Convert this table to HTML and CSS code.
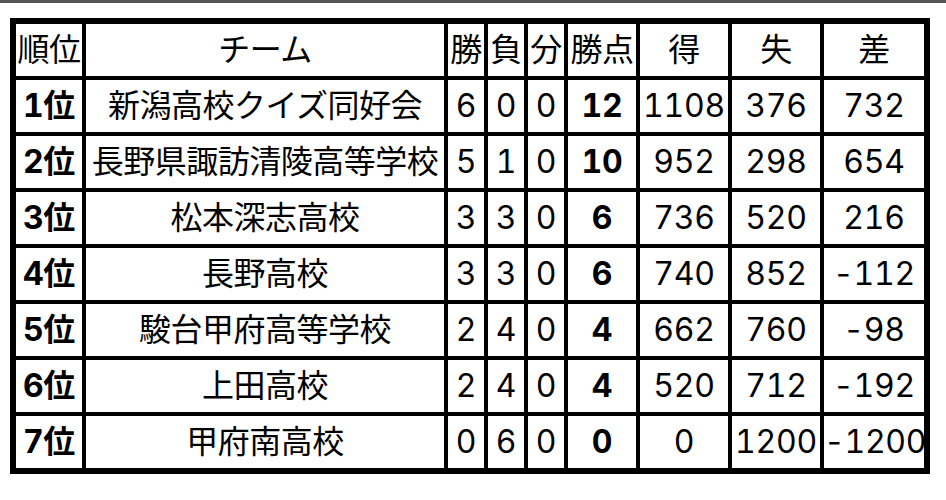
FILE: index.html
```html
<!DOCTYPE html>
<html lang="ja">
<head>
<meta charset="utf-8">
<link rel="stylesheet" href="styles.css">
</head>
<body>
<div class="topbar"></div>
<div class="wrap">
<table class="standings">
<colgroup>
<col class="c-rank"><col class="c-team"><col class="c-s"><col class="c-s"><col class="c-s"><col class="c-pt"><col class="c-n"><col class="c-n"><col class="c-d">
</colgroup>
<thead>
<tr><th>順位</th><th>チーム</th><th>勝</th><th>負</th><th>分</th><th>勝点</th><th>得</th><th>失</th><th>差</th></tr>
</thead>
<tbody>
<tr><td class="rank">1位</td><td class="team">新潟高校クイズ同好会</td><td>6</td><td>0</td><td>0</td><td class="pt">12</td><td>1108</td><td>376</td><td>732</td></tr>
<tr><td class="rank">2位</td><td class="team">長野県諏訪清陵高等学校</td><td>5</td><td>1</td><td>0</td><td class="pt">10</td><td>952</td><td>298</td><td>654</td></tr>
<tr><td class="rank">3位</td><td class="team">松本深志高校</td><td>3</td><td>3</td><td>0</td><td class="pt">6</td><td>736</td><td>520</td><td>216</td></tr>
<tr><td class="rank">4位</td><td class="team">長野高校</td><td>3</td><td>3</td><td>0</td><td class="pt">6</td><td>740</td><td>852</td><td>-112</td></tr>
<tr><td class="rank">5位</td><td class="team">駿台甲府高等学校</td><td>2</td><td>4</td><td>0</td><td class="pt">4</td><td>662</td><td>760</td><td>-98</td></tr>
<tr><td class="rank">6位</td><td class="team">上田高校</td><td>2</td><td>4</td><td>0</td><td class="pt">4</td><td>520</td><td>712</td><td>-192</td></tr>
<tr><td class="rank">7位</td><td class="team">甲府南高校</td><td>0</td><td>6</td><td>0</td><td class="pt">0</td><td>0</td><td>1200</td><td>-1200</td></tr>
</tbody>
</table>
</div>
</body>
</html>
```
FILE: styles.css
```css
html, body {
  margin: 0;
  padding: 0;
  background: #fff;
}
body {
  font-family: "Inter", "Noto Sans CJK JP", "Noto Sans", sans-serif;
  color: #000;
}
.topbar {
  height: 3px;
  background: #555;
}
.wrap {
  padding: 15px 0 0 10px;
}
.standings {
  border-collapse: separate;
  border-spacing: 0;
  border: 4px solid #000;
  table-layout: fixed;
  width: 920px;
}
.standings th,
.standings td {
  border: 2px solid #000;
  padding: 0;
  height: 52px;
  box-sizing: content-box;
  font-size: 32px;
  font-weight: 400;
  line-height: 52px;
  text-align: center;
  white-space: nowrap;
  overflow: visible;
  font-variant-numeric: tabular-nums;
  letter-spacing: -0.3px;
}
.standings th,
.standings td.team {
  letter-spacing: -0.5px;
}
.c-rank { width: 70px; }
.c-team { width: 362px; }
.c-s { width: 40px; }
.c-pt { width: 72px; }
.c-n { width: 92px; }
.c-d { width: 104px; }
.standings td.rank,
.standings td.pt {
  font-weight: 700;
}
```
